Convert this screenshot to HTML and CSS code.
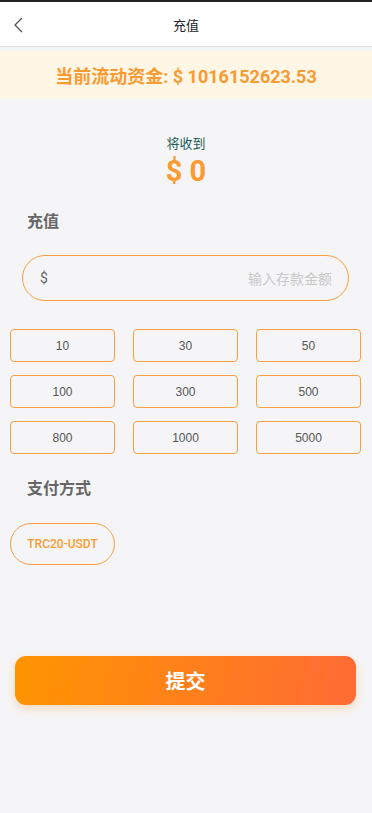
FILE: index.html
```html
<!DOCTYPE html>
<html lang="zh">
<head>
<meta charset="utf-8">
<link rel="stylesheet" href="styles.css">
</head>
<body>
<div class="topline"></div>
<header class="header">
  <svg class="back" width="12" height="16" viewBox="0 0 12 16"><path d="M9 1 L2 8 L9 15" fill="none" stroke="#555" stroke-width="1.3"/></svg>
  <div class="title">充值</div>
</header>
<div class="banner">当前流动资金: $ 1016152623.53</div>
<div class="receive">
  <div class="receive-label">将收到</div>
  <div class="receive-amount">$ 0</div>
</div>
<div class="section-title first">充值</div>
<div class="input-wrap">
  <span class="cur">$</span>
  <span class="placeholder">输入存款金额</span>
</div>
<div class="grid">
  <div class="amt">10</div>
  <div class="amt">30</div>
  <div class="amt">50</div>
  <div class="amt">100</div>
  <div class="amt">300</div>
  <div class="amt">500</div>
  <div class="amt">800</div>
  <div class="amt">1000</div>
  <div class="amt">5000</div>
</div>
<div class="section-title">支付方式</div>
<div class="methods"><div class="method">TRC20-USDT</div></div>
<div class="submit-wrap"><div class="submit">提交</div></div>
</body>
</html>
```
FILE: styles.css
```css
html, body { margin: 0; padding: 0; }
body {
  background: #f5f5f7;
  font-family: Roboto, "Noto Sans CJK SC", sans-serif;
  width: 372px;
  min-height: 813px;
}
.topline { height: 2px; background: #222; }
.header {
  height: 44px;
  background: #fff;
  border-bottom: 1px solid #e2e2e2;
  position: relative;
  display: flex;
  align-items: center;
  justify-content: center;
}
.back { position: absolute; left: 13px; top: 15px; }
.title { font-size: 13px; color: #222; }
.banner {
  margin-top: 4px;
  height: 48px;
  background: #fff6e6;
  color: #f99b32;
  font-weight: 700;
  font-size: 18px;
  display: flex;
  align-items: center;
  justify-content: center;
}
.receive { text-align: center; padding-top: 35px; }
.receive-label { font-size: 13px; color: #1d5c58; line-height: 20px; }
.receive-amount { font-size: 29px; font-weight: 700; color: #f99b32; line-height: 34px; }
.section-title {
  font-size: 16px;
  font-weight: 700;
  color: #666;
  padding-left: 27px;
  line-height: 22px;
}
.section-title.first { margin-top: 23px; }
.input-wrap {
  margin: 22px 23px 0 22px;
  height: 44px;
  border: 1px solid #f7a040;
  border-radius: 23px;
  display: flex;
  align-items: center;
  justify-content: space-between;
  padding: 0 16px 0 17px;
}
.cur { font-size: 14px; color: #666; }
.placeholder { font-size: 14px; color: #c8c8c8; }
.grid {
  margin: 28px 11px 0 10px;
  display: grid;
  grid-template-columns: repeat(3, 1fr);
  column-gap: 18px;
  row-gap: 13px;
}
.amt {
  height: 31px;
  border: 1px solid #f7a040;
  border-radius: 4px;
  display: flex;
  align-items: center;
  justify-content: center;
  font-family: "Liberation Sans", Arial, sans-serif;
  font-size: 12px;
  color: #555;
}
.grid + .section-title { margin-top: 24px; }
.methods { padding: 23px 0 0 10px; }
.method {
  width: 103px;
  height: 40px;
  border: 1px solid #f7a040;
  border-radius: 21px;
  display: flex;
  align-items: center;
  justify-content: center;
  color: #f99b32;
  font-size: 12px;
  font-weight: 500;
}
.submit-wrap { padding: 91px 16px 0 15px; }
.submit {
  height: 49px;
  border-radius: 11px;
  background: linear-gradient(100deg, #ff9500, #ff6b35);
  box-shadow: 0 4px 10px rgba(255, 160, 60, 0.3);
  color: #fff;
  font-size: 20px;
  font-weight: 700;
  display: flex;
  align-items: center;
  justify-content: center;
}
```
